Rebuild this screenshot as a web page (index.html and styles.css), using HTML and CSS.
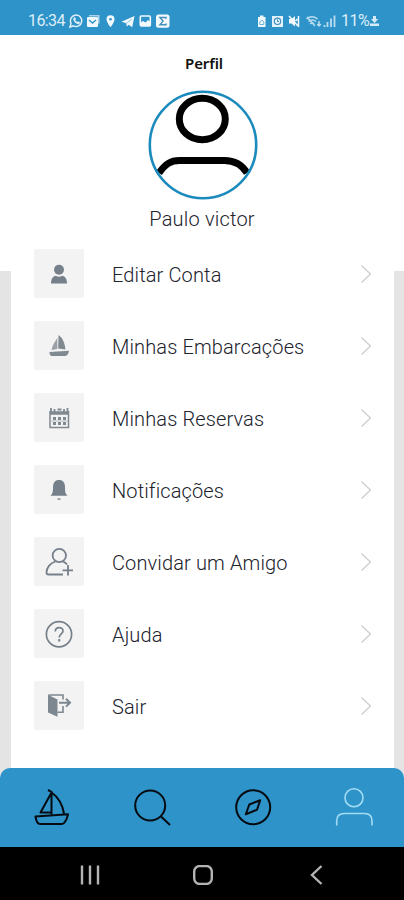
FILE: index.html
```html
<!DOCTYPE html>
<html lang="pt-BR">
<head>
<meta charset="utf-8">
<title>Perfil</title>
<link rel="stylesheet" href="styles.css">
</head>
<body>
<div class="phone">
  <header class="status">
    <span class="clock">16:34</span>
    <svg class="status-left" width="102" height="16" viewBox="68 13 102 16">
      <g fill="none" stroke="#e3f1fa" stroke-width="1.5">
        <path d="M70 27l1-3.600a5.700 5.700 0 1 1 2.500 2.500z"/>
        <path d="M73.500 18.500c0 3 2.500 5.500 5.500 5.500l1-1.500-2-1-1 .8-2-2 .8-1-1-2z" fill="#e3f1fa" stroke-width=".4"/>
      </g>
      <path d="M89 15h10.500v8.500h-1.500v-7H89z" fill="#a9d3ea"/>
      <rect x="87" y="17" width="11" height="10" rx="1" fill="#f2f9fd"/>
      <path d="M89 20l3.500 3 3.500-3" fill="none" stroke="#2e93c8" stroke-width="1.400"/>
      <path d="M110.500 15.300a4 4 0 0 1 4 4c0 3-4 8-4 8s-4-5-4-8a4 4 0 0 1 4-4z" fill="#f2f9fd"/>
      <circle cx="110.500" cy="19.300" r="1.300" fill="#2e93c8"/>
      <path d="M121.500 21.800l13-5.800-2.300 11.300-3.400-2.600-2 1.800-.5-3.200z" fill="#f2f9fd"/>
      <path d="M126.600 23.200l5-4" stroke="#6fb4da" stroke-width=".8"/>
      <rect x="140.300" y="16" width="10" height="10" rx="1" fill="none" stroke="#f2f9fd" stroke-width="1.600"/>
      <path d="M140 23l3-2 2.500 1.500 2.500-2.500 2.500 2v4h-10.500z" fill="#f2f9fd"/>
      <rect x="156" y="14.500" width="13.500" height="13.300" rx="2.500" fill="#f2f9fd"/>
      <path d="M166 18.800v-1.300h-6l3 3.600-3 3.700h6v-1.400" fill="none" stroke="#468fb8" stroke-width="1.500"/>
    </svg>
    <svg class="status-right" width="83" height="16" viewBox="255 13 83 16">
      <path d="M258 17h2v-1.600h3.500V17h2v10H258z" fill="#f2f9fd"/>
      <path d="M259.800 22l2-2 2 2v2.500h-4z" fill="none" stroke="#6db2d7"/>
      <path d="M272 16h11v11h-11z" fill="#e3f1fa"/>
      <circle cx="277.500" cy="21.300" r="3.200" fill="none" stroke="#398fbe" stroke-width="1.100"/>
      <path d="M277.500 19.500v2h1.500" fill="none" stroke="#398fbe"/>
      <path d="M289 19h2.500l3.500-3v10.500l-3.500-3H289z" fill="#f2f9fd"/>
      <path d="M289 16l9.500 10.500M298.500 16v11M295.500 21l2-2" stroke="#f2f9fd" stroke-width="1.500"/>
      <g fill="none" stroke="#b9dcef" stroke-width="1.500">
        <path d="M306.500 19q5.500-4.500 11 0M308.500 21.500q3.800-3 7.500 0M310 24q2.500-2 4 0"/>
        <path d="M307 17l8 9M319 21v5m-1.800-2l1.800 2 1.800-2"/>
      </g>
      <path d="M324.500 25v2M327.500 22v5M331 18.500v8.500M334.500 15.500v11.500" stroke="#b9dcef" stroke-width="1.800"/>
    </svg>
    <span class="battery">11%</span>
    <svg class="charge" width="11" height="14" viewBox="0 0 11 14"><path d="M4 2h3v3h2.200L5.500 9 2 5h2zM1 9.500h9V12H1z" fill="#d6ebf7"/></svg>
  </header>

  <main class="screen">
    <section class="profile">
      <h1 class="title">Perfil</h1>
      <svg class="avatar" width="110" height="110" viewBox="0 0 110 110">
        <defs><clipPath id="face"><circle cx="55" cy="55" r="53"/></clipPath></defs>
        <g fill="none" stroke="#000" stroke-width="7" clip-path="url(#face)">
          <ellipse cx="54.300" cy="29" rx="23" ry="20.800"/>
          <path d="M11 83C17.500 74 22.500 70.500 31.500 70.500H76.500C85.500 70.500 93.500 74 99 83"/>
        </g>
        <circle cx="55" cy="55" r="53.200" fill="none" stroke="#1b8abc" stroke-width="2.600"/>
      </svg>
      <p class="name">Paulo victor</p>
    </section>

    <ul class="menu">
      <li class="row">
        <span class="tile"><svg width="32" height="32" viewBox="0 0 32 32" fill="#76808a"><circle cx="16" cy="11.700" r="5"/><path d="M8 25.500c0-5 2.500-7.500 5-7.700q3 1.700 6 0c3 .2 5 3 5 7.700z"/></svg></span>
        <span class="label">Editar Conta</span>
        <svg class="chevron" width="12" height="20" viewBox="0 0 12 20"><path d="M1.500 1.500L10.500 10l-9 8.500"/></svg>
      </li>
      <li class="row">
        <span class="tile"><svg width="32" height="32" viewBox="0 0 32 32" fill="#808890"><path d="M15.500 5c3.500 2 6.200 7.500 7 14.500l-7.300-1z"/><path d="M14.300 8v11L8.500 20c1-4.500 3-8 5.800-12z" fill="#9aa1a8"/><path d="M6.500 22l19.500-1.300c-.7 3.800-2 5.300-4.500 5.300H9c-1.600 0-2.500-1.500-2.500-4z"/></svg></span>
        <span class="label">Minhas Embarcações</span>
        <svg class="chevron" width="12" height="20" viewBox="0 0 12 20"><path d="M1.500 1.500L10.500 10l-9 8.500"/></svg>
      </li>
      <li class="row">
        <span class="tile"><svg width="32" height="32" viewBox="0 0 32 32" fill="none" stroke="#808890"><path d="M7 9v16.500h18.500V9" stroke-width="1.500"/><path d="M7 11h18.500" stroke-width="3.500"/><path d="M8 6v4M11.500 7v3M21 7v3M24.500 6v4M14.500 7.500h4" stroke-width="1.800"/><path d="M10 16.500h3m2 0h3m2 0h3M10 21.500h3m2 0h3m2 0h3" stroke-width="3"/><path d="M7 19h18" stroke="#b8bdc2"/></svg></span>
        <span class="label">Minhas Reservas</span>
        <svg class="chevron" width="12" height="20" viewBox="0 0 12 20"><path d="M1.500 1.500L10.500 10l-9 8.500"/></svg>
      </li>
      <li class="row">
        <span class="tile"><svg width="32" height="32" viewBox="0 0 32 32" fill="#76808a"><path d="M7.500 21.800c2-2 2.500-3.500 2.500-8.300 0-5 2-7.500 6-7.500s6 2.500 6 7.500c0 4.800.5 6.300 2.500 8.300zM14 24.500h4q-2 3-4 0z"/></svg></span>
        <span class="label">Notificações</span>
        <svg class="chevron" width="12" height="20" viewBox="0 0 12 20"><path d="M1.500 1.500L10.500 10l-9 8.500"/></svg>
      </li>
      <li class="row">
        <span class="tile"><svg width="32" height="32" viewBox="0 0 32 32" fill="none" stroke="#76808a" stroke-width="1.800"><circle cx="16.300" cy="9.500" r="6.700"/><path d="M12.500 15.500C7 17 3.500 22 3.500 26.500q0 2 2 2H20M20 15.500q2.500 1 4 3M25 19v10.500M19.500 24.300h10.500"/></svg></span>
        <span class="label">Convidar um Amigo</span>
        <svg class="chevron" width="12" height="20" viewBox="0 0 12 20"><path d="M1.500 1.500L10.500 10l-9 8.500"/></svg>
      </li>
      <li class="row">
        <span class="tile"><svg width="32" height="32" viewBox="0 0 32 32" fill="none" stroke="#76808a" stroke-width="1.700"><circle cx="16" cy="16.300" r="12.600"/><path d="M12.300 13.500c0-5 7.700-5 7.700-.6 0 3-3.800 3-3.800 6.500"/><circle cx="16.200" cy="22.300" r=".5"/></svg></span>
        <span class="label">Ajuda</span>
        <svg class="chevron" width="12" height="20" viewBox="0 0 12 20"><path d="M1.500 1.500L10.500 10l-9 8.500"/></svg>
      </li>
      <li class="row">
        <span class="tile"><svg width="32" height="32" viewBox="0 0 32 32"><path d="M5 4.800l9.500 4.700v17.300L5 22.500z" fill="#7d8790"/><g fill="none" stroke="#7d8790" stroke-width="1.600"><path d="M5.500 5H20v4.500M14.500 22.300H20V16"/><path d="M16 12.700h10.500M23 8.800l4 3.900-4 3.900" stroke-width="2"/></g></svg></span>
        <span class="label">Sair</span>
        <svg class="chevron" width="12" height="20" viewBox="0 0 12 20"><path d="M1.500 1.500L10.500 10l-9 8.500"/></svg>
      </li>
    </ul>
  </main>

  <div class="dock">
    <nav class="tabs">
      <svg width="40" height="40" viewBox="0 0 40 40"><path d="M17 2l3.500 1.800v22.500M20.500 4.500C27 9 31.500 17 33 25.500M20 5.500L9.500 24.500H20M4.500 28.500l32.500-2.300c-1 5-3.500 9.800-6 9.800H9c-2.500 0-3.800-2.500-4.500-7.500z"/></svg>
      <svg width="40" height="40" viewBox="0 0 40 40"><circle cx="18.200" cy="17.500" r="15"/><path d="M29 28.500l9 8.500"/></svg>
      <svg width="40" height="40" viewBox="0 0 40 40"><circle cx="20.200" cy="19.300" r="17"/><path d="M27.200 12.300l-3.200 9.500-11.200 4.500 3.500-9.800z"/></svg>
      <svg class="active" width="40" height="40" viewBox="0 0 40 40"><circle cx="20" cy="9.800" r="9"/><path d="M2.700 37.500V33q0-7.500 7.500-7.500h20.300q7.500 0 7.500 7.500v4.500"/></svg>
    </nav>
  </div>

  <footer class="system">
    <svg width="20" height="20" viewBox="0 0 20 20"><path d="M2 .5v19M10 .5v19M18 .5v19"/></svg>
    <svg width="20" height="20" viewBox="0 0 20 20"><rect x="1.200" y="1" width="17.600" height="18" rx="5.500"/></svg>
    <svg width="20" height="20" viewBox="0 0 20 20"><path d="M15.500 1L6 10l9.500 9"/></svg>
  </footer>
</div>
</body>
</html>
```
FILE: styles.css
```css
* { box-sizing: border-box; }
body, h1, p, ul { margin: 0; padding: 0; }
body { width: 404px; height: 900px; font-family: Roboto, "Liberation Sans", sans-serif; color: #20222c; }
svg { display: block; flex: none; }
.phone { display: flex; flex-direction: column; height: 900px; overflow: hidden; }

.status { display: flex; align-items: center; height: 35px; padding: 7px 24px 0 28px; background: #2e93c8; color: #dceef8; font-size: 16px; line-height: 16px; }
.clock { width: 36px; white-space: nowrap; letter-spacing: -.6px; }
.status-left { margin-left: 4px; }
.status-right { margin-left: auto; }
.battery { width: 27px; margin-left: 3px; white-space: nowrap; letter-spacing: -.5px; }
.charge { margin-left: 1px; }

.screen { flex: none; height: 733px; background: linear-gradient(#fff 236px, #e4e4e4 236px); }
.profile { display: flex; flex-direction: column; align-items: center; height: 214px; padding-top: 18px; }
.title { margin-left: 4px; font: 600 15px/20px "Noto Sans", sans-serif; letter-spacing: -.1px; color: #111; }
.avatar { margin-top: 17px; margin-left: 1px; }
.name { margin-top: 7px; font-size: 20px; line-height: 24px; letter-spacing: .2px; font-weight: 350; white-space: nowrap; }

.menu { height: 519px; margin: 0 10px 0 11px; padding: 0 22px 0 23px; background: #fff; list-style: none; }
.row { display: flex; align-items: center; height: 49px; margin-bottom: 23px; }
.tile { display: grid; place-items: center; width: 50px; height: 49px; border-radius: 2px; background: #f3f3f3; }
.label { flex: 1; margin-left: 28px; font-size: 20px; font-weight: 350; line-height: 24px; padding-top: 2px; letter-spacing: .13px; white-space: nowrap; }
.chevron { fill: none; stroke: #cbcbcb; stroke-width: 1.2; }

.dock { background: #e4e4e4; }
.tabs { display: grid; grid-template-columns: repeat(4, 1fr); place-items: center; height: 79px; border-radius: 10px 10px 0 0; background: #2e93c8; fill: none; stroke: #050b10; stroke-width: 2; stroke-linejoin: round; }
.tabs .active { stroke: #a2dcf5; stroke-width: 1.6; margin-left: 1px; }

.system { display: flex; justify-content: space-between; align-items: center; height: 53px; padding: 2px 78px 0 80px; background: #000; fill: none; stroke: #b4b4b4; stroke-width: 2.4; }
```
